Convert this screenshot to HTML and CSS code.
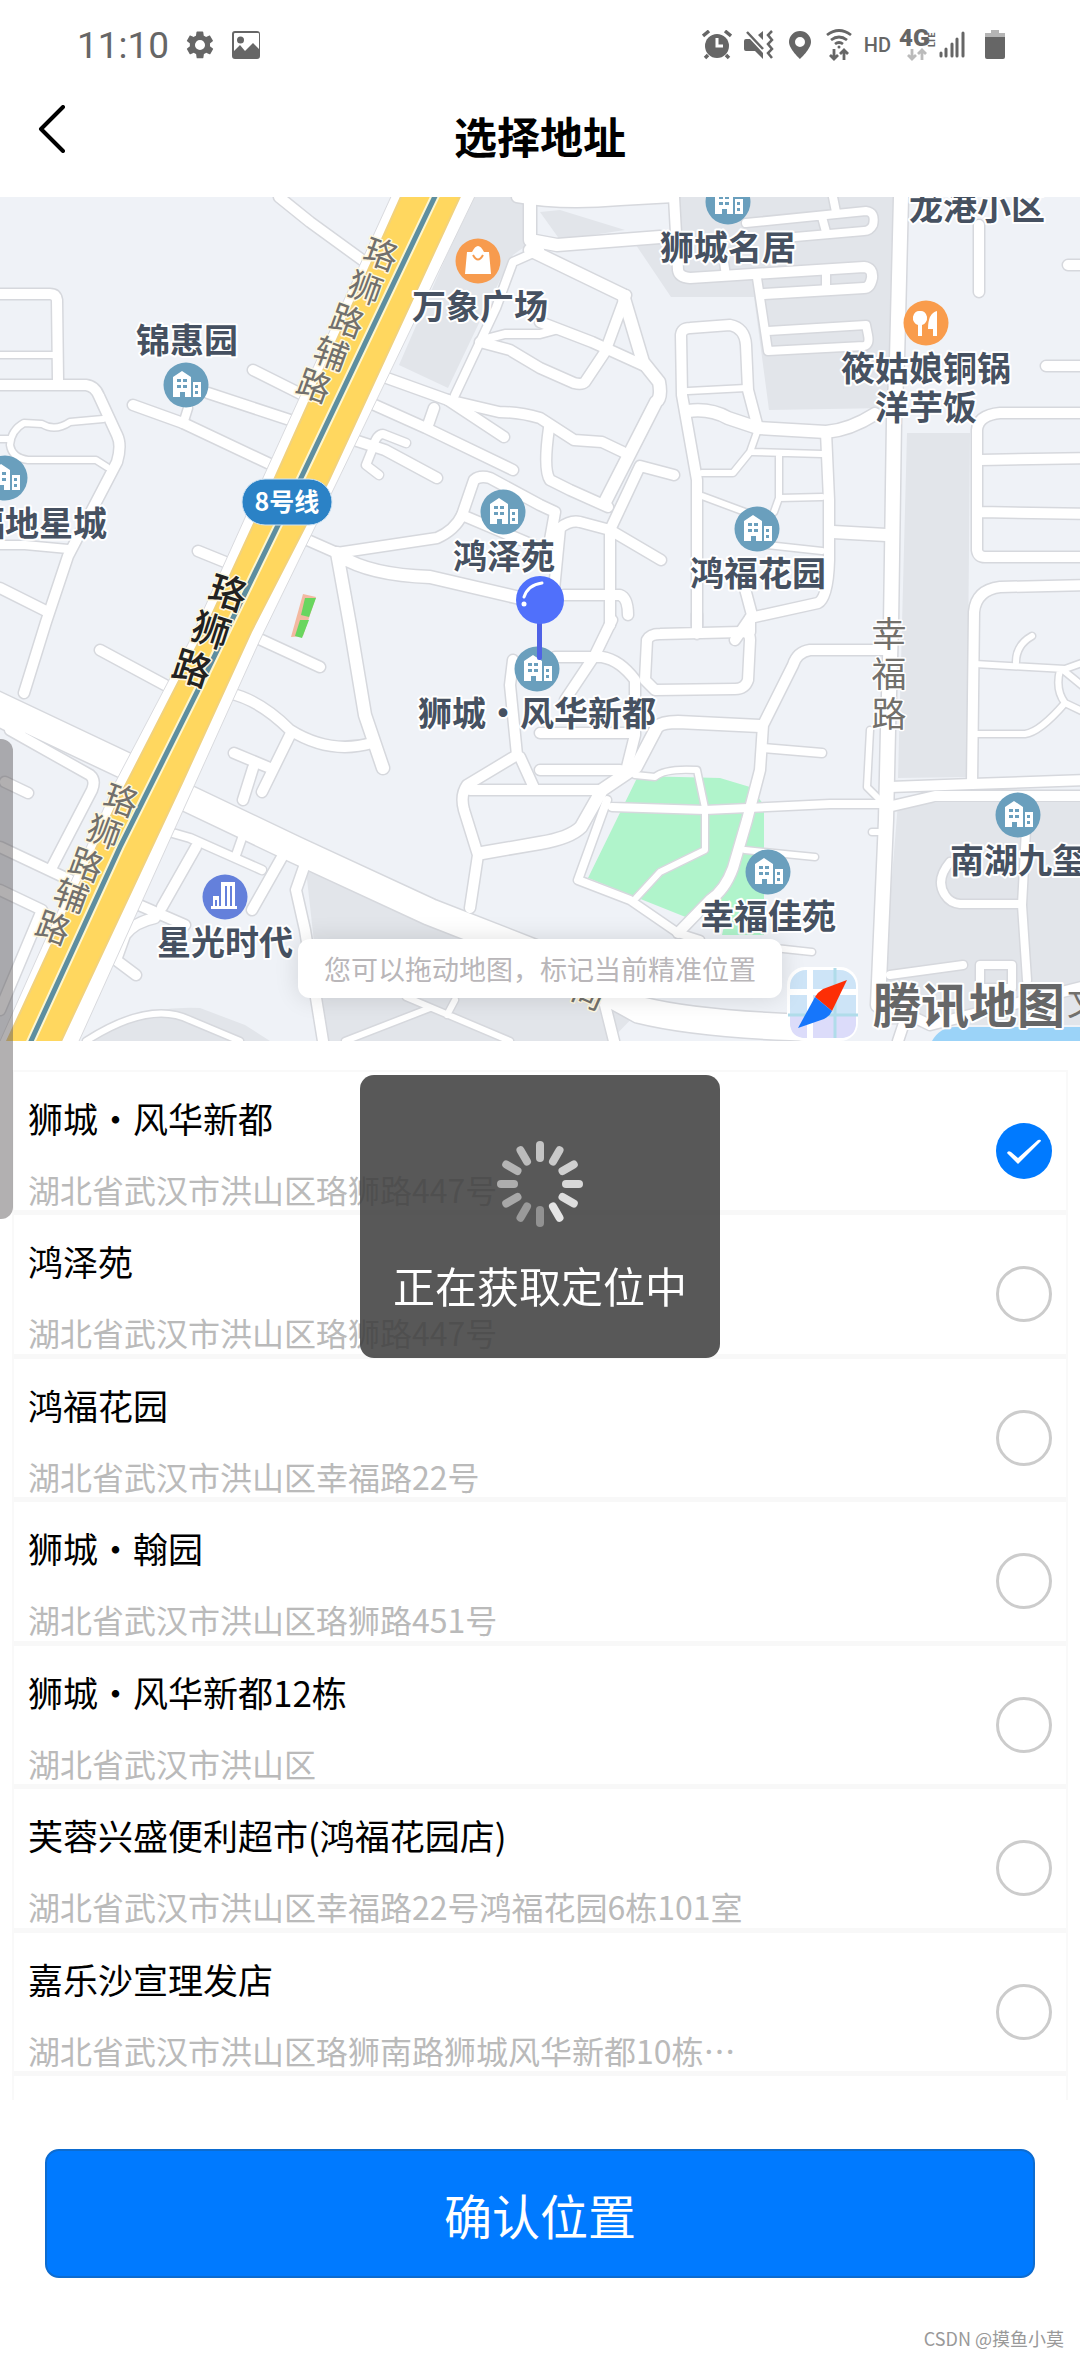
FILE: index.html
```html
<!DOCTYPE html>
<html lang="zh-CN">
<head>
<meta charset="utf-8">
<meta name="viewport" content="width=device-width, initial-scale=1">
<title>选择地址</title>
<link rel="stylesheet" href="styles.css">
</head>
<body>
<div class="statusbar">
  <div class="status-left">
    <span class="clock">11:10</span>
    <svg width="28" height="30" viewBox="2 2 20 20" fill="currentColor"><path d="M19.1 12.9a7 7 0 0 0 0-1.9l2-1.6c.2-.1.2-.4.1-.6l-1.900-3.300c-.1-.2-.4-.3-.6-.2l-2.400 1a7 7 0 0 0-1.600-.9l-.4-2.600a.5.500 0 0 0-.5-.4h-3.800a.5.500 0 0 0-.5.400l-.4 2.600c-.6.200-1.100.600-1.600.900l-2.400-1c-.2-.1-.5 0-.6.200L2.700 8.800c-.1.200-.1.500.1.600l2 1.600a7 7 0 0 0 0 1.900l-2 1.600c-.2.100-.2.400-.1.600l1.900 3.300c.1.200.4.300.6.200l2.400-1c.5.400 1 .7 1.600.9l.4 2.600c0 .2.200.4.500.4h3.800c.2 0 .4-.2.500-.4l.4-2.600c.6-.2 1.100-.6 1.600-.9l2.400 1c.2.100.5 0 .6-.2l1.900-3.300c.1-.2.100-.5-.1-.6zM12 15.600a3.600 3.600 0 1 1 0-7.200 3.600 3.600 0 0 1 0 7.200z"/></svg>
    <svg class="picture" width="28" height="28" viewBox="0 0 28 28"><path fill="currentColor" fill-rule="evenodd" d="M3 0h22a3 3 0 0 1 3 3v22a3 3 0 0 1-3 3H3a3 3 0 0 1-3-3V3a3 3 0 0 1 3-3zM2 3v17l6-6 5 6 8-8 6 6V3a1 1 0 0 0-1-1H3a1 1 0 0 0-1 1z"/><circle cx="8.500" cy="9" r="3.500" fill="currentColor"/></svg>
  </div>
  <div class="status-right">
    <svg width="30" height="30" viewBox="0 0 30 30"><circle cx="15" cy="16" r="12" fill="currentColor"/><path d="M1 6l6-5M29 6l-6-5M6 25l-3 3M24 25l3 3" stroke="currentColor" stroke-width="3.500" fill="none"/><path d="M15 8v8h6" stroke="#fff" stroke-width="3" fill="none"/></svg>
    <svg width="30" height="30" viewBox="0 0 30 30"><path fill="currentColor" d="M0 11q0-2 2-2h4L19 23v6l-8-8H2q-2 0-2-2zM14 5l5-4v9z"/><path d="M3 2l16 17M28 1l-4 4 4 5-4 4 4 5-4 4 4 5" stroke="currentColor" stroke-width="2.500" fill="none"/></svg>
    <svg class="pin" width="24" height="30" viewBox="0 0 24 30"><path fill="currentColor" fill-rule="evenodd" d="M12 1a11 11 0 0 1 11 11c0 7-11 17-11 17S1 19 1 12A11 11 0 0 1 12 1zm0 6a5 5 0 1 0 0 10 5 5 0 0 0 0-10z"/></svg>
    <svg width="26" height="34" viewBox="0 0 26 34" fill="none" stroke="currentColor" stroke-width="2.800"><path d="M1 7q12-9 24 0M5 12q8-6 16 0M9 16q4-3 8 0"/><circle cx="13" cy="19" r="1.500" fill="currentColor" stroke="none"/><path d="M8 21v10M4 27l4 4 4-4M18 32V22M14 26l4-4 4 4"/></svg>
    <span class="hd">HD</span>
    <svg class="lte" width="38" height="34" viewBox="0 0 38 34"><text class="lte-main" x="0" y="18">4G</text><text class="lte-side" transform="translate(36 19) rotate(-90)">LTE</text><path d="M13 21v10M9 27l4 4 4-4M23 32V22M19 26l4-4 4 4" fill="none" stroke="#bbb" stroke-width="2.800"/></svg>
    <svg width="26" height="28" viewBox="0 0 26 28" stroke="currentColor" stroke-width="3" stroke-linecap="round"><path d="M2 22v3M7 18v7M13 13v12M18 8v17M24 2v23"/></svg>
    <svg class="battery" width="20" height="30" viewBox="0 0 20 30"><path fill="#b5b5b5" d="M6 0h8v3h6v5H0V3h6z"/><path fill="currentColor" d="M0 7h20v20q0 2-2 2H2q-2 0-2-2z"/></svg>
  </div>
</div>

<header class="navbar">
  <button class="back" type="button" aria-label="返回"><svg width="28" height="48" viewBox="0 0 28 48"><path d="M25 2L3 24l22 22" fill="none" stroke="#000" stroke-width="4" stroke-linecap="round" stroke-linejoin="round"/></svg></button>
  <h1>选择地址</h1>
</header>

<section class="map">
  <svg class="map-canvas" viewBox="0 197 1080 844" preserveAspectRatio="xMidYMid slice">
    <defs>
      <symbol id="estate" viewBox="0 0 46 46">
        <circle cx="23" cy="23" r="22.500" fill="#6a9fbd"/>
        <path fill="#fff" fill-rule="evenodd" d="M10 35V15l9-6 9 6v20h-6v-5h-5v5zm4-18v3h4v-3zm6 0v3h4v-3zm-6 6v3h4v-3zm6 0v3h4v-3zM30 20h8v15h-8zm2 3v3h3v-3zm0 6v3h3v-3z"/>
      </symbol>
      <g id="roads">
        <path class="w10" d="M279 197L310 222 365 262"/>
        <path class="w10" d="M0 294H50Q56 294 57 300L58 380"/>
        <path class="w6" d="M0 355H55"/>
        <path class="w10" d="M0 385H86Q95 386 99 396L117 435Q122 445 117 462L68 556 46 622 24 693"/>
        <path class="w6" d="M103 419L70 422Q55 432 42 424L24 423Q11 430 10 445 12 458 28 460H96L107 467M0 439H10"/>
        <path class="w10" d="M253 370L303 395M208 393L296 422M133 405L183 423 272 465M198 551L235 566"/>
        <path class="w8" d="M188 408L183 424M0 545H25L68 549"/>
        <path class="w10" d="M0 588L48 612"/>
        <path class="w10" d="M384 377L448 400 499 412Q520 412 540 418L574 440 602 442 623 452"/>
        <path class="w10" d="M448 400L504 437M368 402L426 428 513 470M434 408L427 428M348 438L385 450 437 478"/>
        <path class="w8" d="M406 443L383 434Q376 434 372 450L366 465 379 475"/>
        <path class="w8" d="M540 250L513 262 496 308 455 395M482 340L505 334 540 334 555 330"/>
        <path class="w10" d="M480 342L510 350 540 368 574 383Q582 385 585 382L605 352 626 295"/>
        <path class="w12" d="M530 197V240L557 245 660 237"/>
        <path class="w12" d="M530 250L623 295 643 362 659 382Q662 398 656 402L605 502"/>
        <path class="w10" d="M540 322L592 342 647 367M517 197Q560 205 620 200L674 197"/>
        <path class="w10" d="M674 197L678 270Q679 277 690 278L864 267Q873 268 872 278 870 288 864 288L764 294"/>
        <path class="w8" d="M746 223L866 211Q876 212 873 225 870 231 864 231L795 237M833 197L836 212M822 217L826 232M724 262L726 276M826 272V288"/>
        <path class="w8" d="M757 278L768 351 864 346Q870 345 868 335L866 325 768 331"/>
        <path class="w14" d="M901 197L897 360 894 420 891 625 888 730 886 820 878 1005"/>
        <path class="w10" d="M697 625V480L682 395 681 335Q682 328 690 328L730 325Q745 328 746 345L748 390 758 428"/>
        <path class="w6" d="M688 391L746 388M757 432L750 452 733 473H702M753 452L822 454M779 455V498L774 512M779 498L822 497M702 496L745 512M767 545L822 551"/>
        <path class="w12" d="M688 411Q710 408 728 418L758 428 826 432Q850 430 875 414M833 532L886 535"/>
        <path class="w10" d="M826 432L829 500V560Q828 598 818 603L750 618 735 640M744 585L752 615"/>
        <path class="w10" d="M549 428Q543 470 550 480L570 490 608 507M674 475L640 466 610 530V625"/>
        <path class="w10" d="M462 515L474 480Q480 475 490 478L540 505 555 512 550 540"/>
        <path class="w10" d="M553 600L560 528Q570 520 580 522L610 530 661 560M564 595H620Q628 598 628 615"/>
        <path class="w10" d="M303 538L337 553 437 538Q455 530 462 515L540 548"/>
        <path class="w12" d="M340 556Q370 575 430 577L520 598M337 553L350 625 365 715 383 768"/>
        <path class="w10" d="M255 637L320 667M229 693Q260 700 290 730 330 755 372 743M290 735L262 792M253 768L243 800M234 753L270 768"/>
        <path class="w26" d="M-20 697L145 775M170 790L296 850 430 912 540 955 640 1010Q700 1025 820 1028"/>
        <path class="w10" d="M0 722L20 732M10 730L90 775Q96 780 92 790L52 867M0 847L70 880M0 890L42 910 0 1010M100 650L165 685M5 782L28 793"/>
        <path class="w8" d="M155 828L190 838 262 870M242 838L235 858"/>
        <path class="w10" d="M196 847L162 907M282 857L252 910M132 902L185 925M155 918Q135 922 125 935L116 960 136 975M304 867L296 890 305 930 323 1041"/>
        <path class="w6" d="M86 1041Q150 1000 190 1020L240 1041M345 1041L430 1008M406 997L510 1041M455 1000L447 1015"/>
        <path class="w10" d="M513 660L510 685 517 755 467 785Q460 795 464 810L478 855 470 908M470 790H600M520 757L535 790"/>
        <path class="w12" d="M482 853L540 843Q570 838 581 827L602 790 636 767 657 727Q662 722 678 722L760 726"/>
        <path class="w10" d="M540 733H630M625 775L635 735V680Q620 660 602 657H555M540 770H620M612 620L595 655 565 700"/>
        <path class="w10" d="M647 640Q650 634 660 634L742 632Q750 632 750 640L748 680Q745 689 735 689L655 690 645 680ZM697 615V634M750 632V618"/>
        <path class="w10" d="M885 650H810Q797 652 793 665L763 725 760 770 747 820 733 868Q725 890 710 900L678 933"/>
        <path class="w8" d="M763 748L822 753M612 807L705 810 830 804H885M607 800L578 880 630 900 678 933 700 940"/>
        <path class="w6" d="M635 775L655 777Q665 768 697 770L705 808V850L660 872 636 898M745 850L815 857M747 945L812 952M870 730L867 787 880 800M872 832H885"/>
        <path class="w10" d="M890 787L972 784 1090 780M892 806L935 796H1090"/>
        <path class="w10" d="M1090 413H1000Q978 415 977 430V550Q978 557 985 557H1090M980 460L1090 458M980 512L1090 514M1090 585L1000 587Q976 590 974 612L972 784"/>
        <path class="w10" d="M979 225V292M1068 265H1090M1046 366H1090"/>
        <path class="w6" d="M975 664L1065 669 1090 660M1016 662Q1016 645 1032 636M975 734H1025Q1040 732 1065 703L1090 715M1060 670Q1055 690 1065 703M1063 670L1090 692"/>
        <path class="w8" d="M1026 830L1022 905 1027 980M950 862Q935 880 945 895 950 903 960 904H1022M890 975L963 965M980 965H1012V988H980Z"/>
        <path class="w10" d="M605 1005L614 1041M898 1041L905 1020M878 1000L930 1025 1090 985"/>
      </g>
    </defs>
    <rect y="197" width="1080" height="844" fill="#eff2f7"/>
    <g fill="#e2e5ea">
      <path d="M472 197H527V245L513 255 490 300 448 388 399 365z"/>
      <path d="M540 212L560 210 625 230 560 240z"/>
      <path d="M636 245L674 240V197H893L888 408 769 410 754 297H671z"/>
      <path d="M907 433H970L967 777 898 778z"/>
      <path d="M898 803H1080V1025H880z"/>
      <path d="M306 870L500 955 640 1010 610 1041H325z"/>
      <path d="M86 1041Q130 1005 200 1008L245 1025 270 1041z"/>
    </g>
    <path fill="#b0f4cb" d="M638 776L720 778 750 787 764 805V935H722L730 900 688 918 588 878z"/>
    <g class="roads casing"><use href="#roads"/></g>
    <g class="roads surface"><use href="#roads"/></g>
    <path fill="#9bd3f8" d="M932 1041Q940 1027 955 1027H1080V1041z"/>
    <path fill="#f3b9a0" d="M303 594L316 597 303 636 291 637z"/>
    <path fill="#69d65f" d="M305 598L316 598 309 617 301 615zM300 620L309 620 302 638 295 636z"/>
    <path fill="#fff" stroke="#d9dade" stroke-width="1" d="M394 190L262 480 190 640 115 783 -4 1050H75L260 640 338 480 478 190z"/>
    <path fill="#ffd75f" stroke="#f2d27c" stroke-width="2" d="M404 190L274 480 204 632 123 790 2 1052H56L182 783 251 632 329 480 463 190z"/>
    <path fill="none" stroke="#fdf6d0" stroke-width="9" d="M438 190L300 480 198 690 120 847 26 1052"/>
    <path fill="none" stroke="#5d8ea0" stroke-width="5" d="M438 190L300 480 198 690 120 847 26 1052"/>

    <g class="street">
      <text transform="translate(382 252) rotate(20)">珞</text><text transform="translate(366 286) rotate(20)">狮</text><text transform="translate(348 319) rotate(20)">路</text><text transform="translate(332 352) rotate(20)">辅</text><text transform="translate(315 384) rotate(20)">路</text>
      <text transform="translate(122 798) rotate(20)">珞</text><text transform="translate(105 830) rotate(20)">狮</text><text transform="translate(87 863) rotate(20)">路</text><text transform="translate(72 894) rotate(20)">辅</text><text transform="translate(54 926) rotate(20)">路</text>
      <text transform="translate(590 991) rotate(24)">尚</text>
    </g>
    <g class="street main">
      <text transform="translate(229 590) rotate(18)">珞</text><text transform="translate(212 628) rotate(18)">狮</text><text transform="translate(193 666) rotate(18)">路</text>
    </g>
    <g class="street upright"><text x="889" y="631">幸</text><text x="889" y="671">福</text><text x="889" y="711">路</text></g>

    <rect x="242" y="479" width="90" height="46" rx="23" fill="#2b82c6" stroke="#cfe3f3"/>
    <text class="line" x="287" y="500">8号线</text>

    <g class="poi">
      <use href="#estate" x="163" y="362" width="46" height="46"/><text x="187" y="338">锦惠园</text>
      <use href="#estate" x="-18" y="455" width="46" height="46"/><text x="39" y="521">福地星城</text>
      <use href="#estate" x="705" y="179" width="46" height="46"/><text x="728" y="245">狮城名居</text>
      <text x="977" y="205">龙港小区</text>
      <use href="#estate" x="480" y="489" width="46" height="46"/><text x="504" y="554">鸿泽苑</text>
      <use href="#estate" x="734" y="506" width="46" height="46"/><text x="758" y="571">鸿福花园</text>
      <use href="#estate" x="514" y="646" width="46" height="46"/><text x="537" y="711">狮城・风华新都</text>
      <use href="#estate" x="745" y="849" width="46" height="46"/><text x="768" y="914">幸福佳苑</text>
      <use href="#estate" x="995" y="792" width="46" height="46"/><text x="1018" y="858">南湖九玺</text>
      <circle cx="225" cy="897" r="22.500" fill="#6480db"/><path fill="#fff" fill-rule="evenodd" d="M211 906h2v-10h6v10h2v-24h14v24h2v3h-26zM215 900v6h2v-6zM225 886v20h2v-20zM230 886v20h2v-20z"/><text x="225" y="940">星光时代</text>
      <circle cx="478" cy="261" r="22.500" fill="#f79b4e"/><path fill="#fff" d="M467 252h5q6-12 12 0h5l2 22h-26z"/><path fill="none" stroke="#f79b4e" stroke-width="2" d="M473 255q5 9 10 0"/><text x="480" y="304">万象广场</text>
      <circle cx="926" cy="323" r="22.500" fill="#f99c4c"/><path fill="#fff" d="M920 311a6 7 0 0 1 2 14v11h-4v-11a6 7 0 0 1 2-14zM937 311v25h-4v-7h-5q0-16 9-18z"/><text x="926" y="366">筱姑娘铜锅</text><text x="926" y="405">洋芋饭</text>
    </g>

    <rect x="537" y="610" width="5" height="50" rx="2" fill="#4f62e6"/>
    <circle cx="540" cy="600" r="24" fill="#5070fb"/>
    <path d="M524 597q4-12 18-14" fill="none" stroke="#fff" stroke-width="3" stroke-linecap="round"/><circle cx="524" cy="604" r="2.500" fill="#fff"/>

    <rect x="787" y="967" width="71" height="74" rx="18" fill="#fff"/>
    <rect x="790" y="970" width="66" height="68" rx="16" fill="#cde4f7"/>
    <path d="M790 1016h66v6q0 16-16 16h-34q-16 0-16-16z" fill="#dcdcfa"/>
    <path d="M788 992h70M810 968v70" stroke="#fff" stroke-width="6"/><path d="M788 1015h70M835 968v70" stroke="#b0dcea" stroke-width="3"/>
    <path fill="#fd2e05" d="M847 980L832 1011 815 997q3-5 8-8z"/><path fill="#1676fb" d="M815 997L832 1011q-2 5-8 8L798 1028z"/>
    <text class="brand" x="969" y="1002">腾讯地图</text><text class="street-end" x="1084" y="1000">文</text>
  </svg>
  <p class="hint">您可以拖动地图，标记当前精准位置</p>
</section>

<form class="picker">
  <ul class="places">
    <li><label><span class="text"><span class="name">狮城・风华新都</span><span class="address">湖北省武汉市洪山区珞狮路447号</span></span><input type="radio" name="place" checked></label></li>
    <li><label><span class="text"><span class="name">鸿泽苑</span><span class="address">湖北省武汉市洪山区珞狮路447号</span></span><input type="radio" name="place"></label></li>
    <li><label><span class="text"><span class="name">鸿福花园</span><span class="address">湖北省武汉市洪山区幸福路22号</span></span><input type="radio" name="place"></label></li>
    <li><label><span class="text"><span class="name">狮城・翰园</span><span class="address">湖北省武汉市洪山区珞狮路451号</span></span><input type="radio" name="place"></label></li>
    <li><label><span class="text"><span class="name">狮城・风华新都12栋</span><span class="address">湖北省武汉市洪山区</span></span><input type="radio" name="place"></label></li>
    <li><label><span class="text"><span class="name">芙蓉兴盛便利超市(鸿福花园店)</span><span class="address">湖北省武汉市洪山区幸福路22号鸿福花园6栋101室</span></span><input type="radio" name="place"></label></li>
    <li><label><span class="text"><span class="name">嘉乐沙宣理发店</span><span class="address">湖北省武汉市洪山区珞狮南路狮城风华新都10栋…</span></span><input type="radio" name="place"></label></li>
  </ul>
  <button class="confirm" type="button">确认位置</button>
</form>

<p class="credit">CSDN @摸鱼小莫</p>
<div class="edge-handle"></div>

<div class="toast" role="status">
  <svg width="88" height="88" viewBox="-44 -44 88 88" stroke-width="8" stroke-linecap="round">
    <g stroke="#d0d0d0"><path d="M0-39V-26" stroke="#c4c4c4"/><path d="M0-39V-26" transform="rotate(30)" stroke="#cacaca"/><path d="M0-39V-26" transform="rotate(60)"/><path d="M0-39V-26" transform="rotate(90)" stroke="#d8d8d8"/><path d="M0-39V-26" transform="rotate(120)" stroke="#dedede"/><path d="M0-39V-26" transform="rotate(150)" stroke="#e5e5e5"/></g>
    <g stroke="#a8a8a8"><path d="M0-39V-26" transform="rotate(180)" stroke="#929292"/><path d="M0-39V-26" transform="rotate(210)" stroke="#9a9a9a"/><path d="M0-39V-26" transform="rotate(240)"/><path d="M0-39V-26" transform="rotate(270)" stroke="#adadad"/><path d="M0-39V-26" transform="rotate(300)" stroke="#b4b4b4"/><path d="M0-39V-26" transform="rotate(330)" stroke="#bcbcbc"/></g>
  </svg>
  <span>正在获取定位中</span>
</div>
</body>
</html>
```
FILE: styles.css
```css
* { box-sizing: border-box; }

body {
  margin: 0;
  background: #fff;
  color: #000;
  font-family: "Noto Sans CJK SC", sans-serif;
}

h1, p, ul { margin: 0; padding: 0; }

/* Status bar */
.statusbar {
  display: flex;
  justify-content: space-between;
  align-items: center;
  height: 90px;
  padding: 0 75px 0 77px;
  color: #666;
}
.status-left, .status-right { display: flex; align-items: center; }
.status-right { gap: 12px; }
.clock {
  margin-right: 17px;
  padding-top: 2px;
  font: 400 37px/40px Roboto, sans-serif;
}
.picture { margin-left: 18px; }
.pin { margin: 0 2px; }
.hd { font: 500 20px/30px Roboto, sans-serif; }
.lte-main { font: 900 24px Roboto, sans-serif; fill: #666; }
.lte-side { font: 700 9px Roboto, sans-serif; fill: #666; }
.lte { margin: 0 -10px 0 -4px; }
.battery { margin-left: 8px; }

/* Title bar */
.navbar {
  display: grid;
  grid-template-columns: 80px 1fr 80px;
  align-items: center;
  height: 107px;
  padding: 0 16px;
}
.back {
  justify-self: start;
  margin: 0 0 29px;
  padding: 8px 22px;
  border: 0;
  background: none;
  line-height: 0;
}
h1 {
  padding-bottom: 18px;
  text-align: center;
  font-size: 43px;
  font-weight: 700;
  line-height: 60px;
}

/* Map */
.map { position: relative; height: 844px; overflow: hidden; }
.map-canvas { display: block; width: 100%; height: 100%; }
.roads { fill: none; stroke-linecap: round; stroke-linejoin: round; }
.casing { stroke: #d6d8dd; --edge: 3px; }
.surface { stroke: #fff; --edge: 0px; }
.w6 { stroke-width: calc(6px + var(--edge)); }
.w8 { stroke-width: calc(8px + var(--edge)); }
.w10 { stroke-width: calc(10px + var(--edge)); }
.w12 { stroke-width: calc(12px + var(--edge)); }
.w14 { stroke-width: calc(14px + var(--edge)); }
.w26 { stroke-width: calc(26px + var(--edge)); }
.map-canvas text {
  text-anchor: middle;
  dominant-baseline: central;
  paint-order: stroke;
  stroke-linejoin: round;
}
.poi text { font-size: 34px; font-weight: 700; fill: #465161; stroke: #fff; stroke-width: 4px; }
.street text { font-size: 34px; fill: #72706c; stroke: #fff8e0; stroke-width: 3px; }
.main text { font-size: 38px; font-weight: 500; fill: #222; }
.upright text { font-size: 35px; stroke: #fff; }
.map-canvas .line { font-size: 25px; font-weight: 700; fill: #fff; }
.map-canvas .brand { font-size: 48px; font-weight: 700; fill: #666768; stroke: #fff; stroke-width: 4px; }
.map-canvas .street-end { font-size: 34px; fill: #72706c; }
.hint {
  position: absolute;
  bottom: 43px;
  left: 50%;
  transform: translateX(-50%);
  padding: 0 26px;
  border-radius: 12px;
  background: #fff;
  box-shadow: 0 0 24px rgba(0, 0, 0, .12);
  color: #b9b6b9;
  font-size: 27px;
  font-weight: 400;
  line-height: 59px;
  white-space: nowrap;
}

/* Nearby places */
.picker { padding: 29px 12px 0; }
.places {
  display: grid;
  grid-auto-rows: 1fr;
  min-height: 1030px;
  padding-bottom: 24px;
  border: 2px solid #f9f9f9;
  border-bottom: 0;
  list-style: none;
}
.places label {
  display: flex;
  justify-content: space-between;
  height: 100%;
  padding: 21px 14px 0;
  border-bottom: 5px solid #f8f8f8;
}
.text { display: flex; flex-direction: column; gap: 28px; }
.name { font-size: 35px; line-height: 50px; }
.address { color: #bababa; font-size: 32px; font-weight: 400; line-height: 36px; }
.places input {
  appearance: none;
  width: 56px;
  height: 56px;
  margin: 30px 0 0;
  border: 3px solid #ccc;
  border-radius: 50%;
}
.places input:checked {
  border: 0;
  background: #007aff url("data:image/svg+xml,%3Csvg xmlns='http://www.w3.org/2000/svg' viewBox='0 0 56 56'%3E%3Cpath d='M11 30q1-3 4-1l7 6 20-18q3-1 3 1L22 41z' fill='%23fff'/%3E%3C/svg%3E");
}
.confirm {
  display: block;
  width: calc(100% - 66px);
  margin: 49px auto 0;
  padding: 27px 0 25px;
  border: 2px solid #0d6cd0;
  border-radius: 14px;
  background: #007aff;
  color: #fff;
  font: 400 48px/73px "Noto Sans CJK SC", sans-serif;
}
.credit {
  padding: 46px 16px 6px 0;
  text-align: right;
  color: #999;
  font-size: 18px;
  line-height: 28px;
}

/* Overlays */
.edge-handle {
  position: absolute;
  top: 739px;
  left: 0;
  width: 13px;
  height: 480px;
  border-radius: 0 12px 12px 0;
  background: rgba(85, 80, 83, .45);
}
.toast {
  position: fixed;
  inset: 74px 0 0;
  display: flex;
  flex-direction: column;
  align-items: center;
  gap: 26px;
  width: 360px;
  height: fit-content;
  margin: auto;
  padding: 65px 0 42px;
  border-radius: 14px;
  background: rgba(63, 63, 63, .87);
  color: #fff;
  font-size: 42px;
  line-height: 62px;
  white-space: nowrap;
}
```
